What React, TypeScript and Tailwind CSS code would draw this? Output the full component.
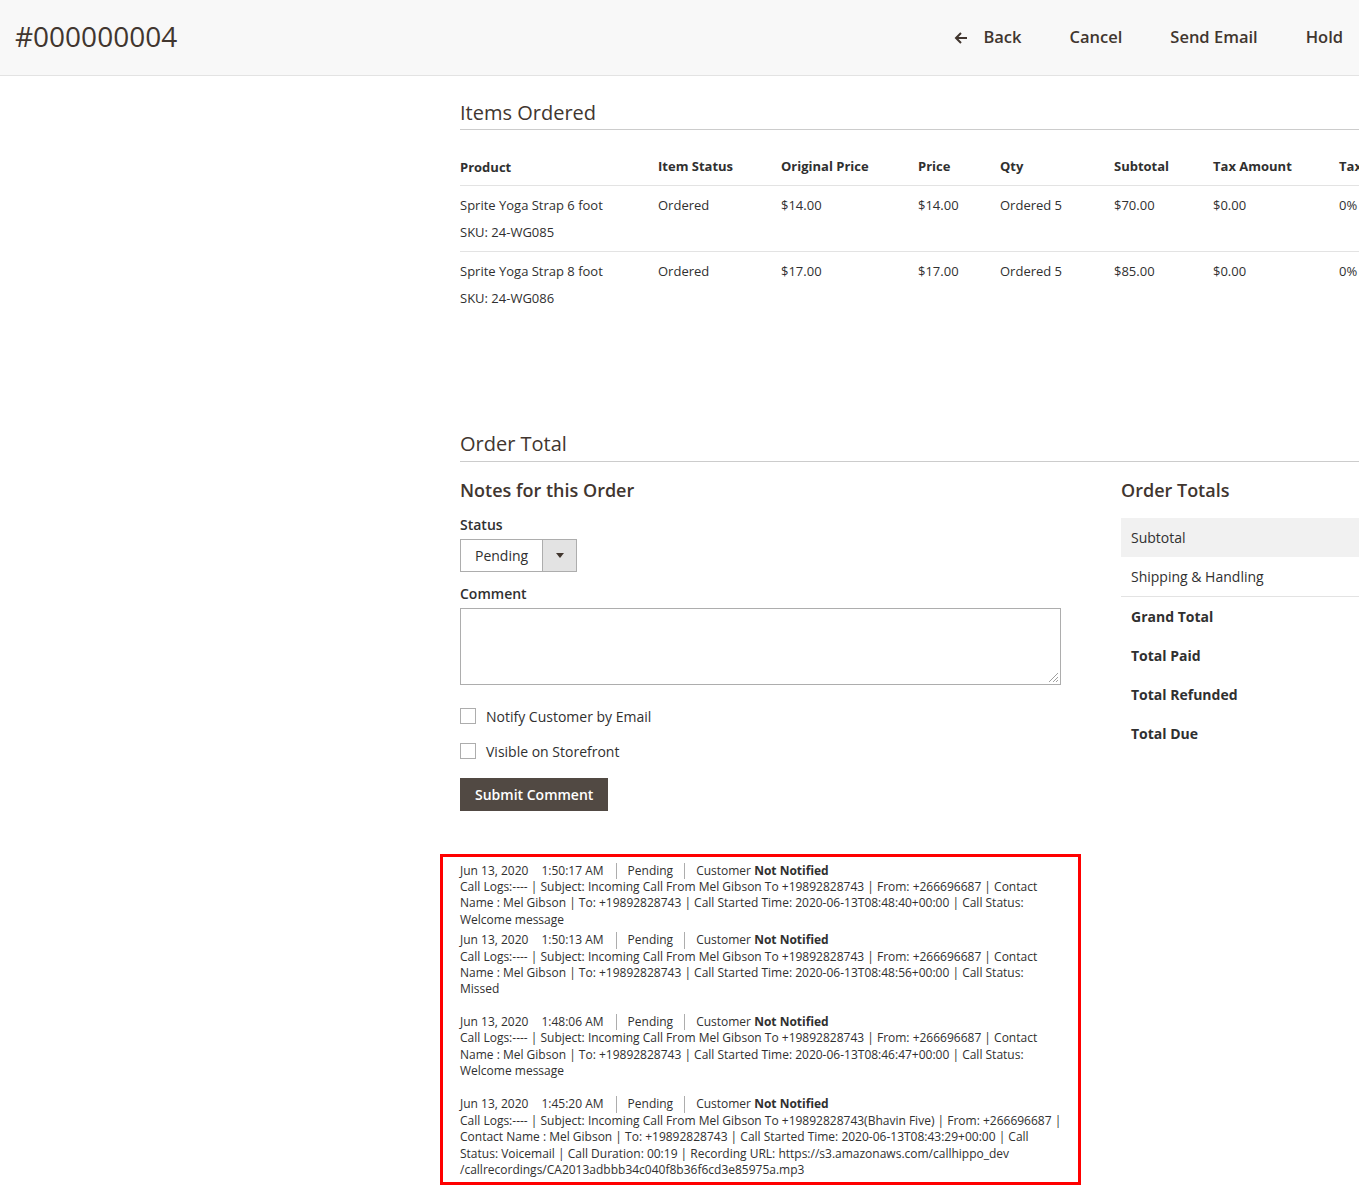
import React from 'react'

const items = [
  { name: 'Sprite Yoga Strap 6 foot', sku: '24-WG085', price: '$14.00', subtotal: '$70.00' },
  { name: 'Sprite Yoga Strap 8 foot', sku: '24-WG086', price: '$17.00', subtotal: '$85.00' },
]

const history = [
  {
    time: '1:50:17 AM',
    text: 'Call Logs:---- | Subject: Incoming Call From Mel Gibson To +19892828743 | From: +266696687 | Contact Name : Mel Gibson | To: +19892828743 | Call Started Time: 2020-06-13T08:48:40+00:00 | Call Status: Welcome message',
    gap: 'mb-[4px]',
  },
  {
    time: '1:50:13 AM',
    text: 'Call Logs:---- | Subject: Incoming Call From Mel Gibson To +19892828743 | From: +266696687 | Contact Name : Mel Gibson | To: +19892828743 | Call Started Time: 2020-06-13T08:48:56+00:00 | Call Status: Missed',
    gap: 'mb-[16px]',
  },
  {
    time: '1:48:06 AM',
    text: 'Call Logs:---- | Subject: Incoming Call From Mel Gibson To +19892828743 | From: +266696687 | Contact Name : Mel Gibson | To: +19892828743 | Call Started Time: 2020-06-13T08:46:47+00:00 | Call Status: Welcome message',
    gap: 'mb-[17px]',
  },
  {
    time: '1:45:20 AM',
    text: 'Call Logs:---- | Subject: Incoming Call From Mel Gibson To +19892828743(Bhavin Five) | From: +266696687 | Contact Name : Mel Gibson | To: +19892828743 | Call Started Time: 2020-06-13T08:43:29+00:00 | Call Status: Voicemail | Call Duration: 00:19 | Recording URL: https://s3.amazonaws.com/callhippo_dev /callrecordings/CA2013adbbb34c040f8b36f6cd3e85975a.mp3',
    gap: '',
  },
]

const totals = ['Grand Total', 'Total Paid', 'Total Refunded', 'Total Due']

export default function App() {
  return (
    <div className="w-[1359px] h-[1185px] overflow-hidden bg-white text-[#303030]" style={{ fontFamily: '"Open Sans", sans-serif' }}>
      {/* Page header */}
      <div className="h-[76px] bg-[#f8f8f8] border-b border-[#e3e3e3] flex items-center justify-between pl-[15px] pr-[16px]">
        <h1 className="text-[28px] text-[#41362f] leading-none pb-[4px]">#000000004</h1>
        <div className="flex items-center text-[16.5px] font-semibold text-[#41362f] gap-[48px]">
          <button className="flex items-center gap-[14px]">
            <svg width="16" height="16" viewBox="0 0 16 16" fill="none" stroke="#41362f" strokeWidth="2">
              <path d="M14 8H3M8 3L3 8l5 5" />
            </svg>
            Back
          </button>
          <button>Cancel</button>
          <button>Send Email</button>
          <button>Hold</button>
        </div>
      </div>

      <div className="ml-[460px] w-[1000px]">
        {/* Items Ordered */}
        <div className="mt-[23px] pb-[2px] border-b border-[#cccccc]">
          <h2 className="text-[20px] text-[#41362f] leading-[28px]">Items Ordered</h2>
        </div>
        <table className="mt-[27px] text-[13px] text-left border-collapse w-[1000px]">
          <thead>
            <tr className="border-b border-[#e3e3e3]">
              <th className="font-bold w-[198px] pb-[8px] leading-[18px]">Product</th>
              <th className="font-bold w-[123px] pb-[8px]">Item Status</th>
              <th className="font-bold w-[137px] pb-[8px]">Original Price</th>
              <th className="font-bold w-[82px] pb-[8px]">Price</th>
              <th className="font-bold w-[114px] pb-[8px]">Qty</th>
              <th className="font-bold w-[99px] pb-[8px]">Subtotal</th>
              <th className="font-bold w-[126px] pb-[8px]">Tax Amount</th>
              <th className="font-bold pb-[8px]">Tax Percent</th>
            </tr>
          </thead>
          <tbody>
            {items.map((it, i) => (
              <tr key={it.sku} className={i === 0 ? 'border-b border-[#e3e3e3] align-top' : 'align-top'}>
                <td className="pt-[10px] pb-[10px] leading-[18px]">
                  <div>{it.name}</div>
                  <div className="mt-[9px]">SKU: {it.sku}</div>
                </td>
                <td className="pt-[10px]">Ordered</td>
                <td className="pt-[10px]">{it.price}</td>
                <td className="pt-[10px]">{it.price}</td>
                <td className="pt-[10px]">Ordered 5</td>
                <td className="pt-[10px]">{it.subtotal}</td>
                <td className="pt-[10px]">$0.00</td>
                <td className="pt-[10px]">0%</td>
              </tr>
            ))}
          </tbody>
        </table>

        {/* Order Total */}
        <div className="mt-[113px] pb-[3px] border-b border-[#cccccc]">
          <h2 className="text-[20px] text-[#41362f] leading-[28px]">Order Total</h2>
        </div>

        <div className="flex mt-[15px]">
          <div className="w-[601px]">
            <h3 className="text-[18px] font-semibold text-[#41362f] leading-[26px]">Notes for this Order</h3>
            <div className="mt-[12px] text-[14px] font-semibold leading-[20px]">Status</div>
            <div className="mt-[4px] flex w-[117px] h-[33px] border border-[#adadad]">
              <div className="flex-1 flex items-center pl-[14px] text-[14px]">Pending</div>
              <div className="w-[34px] bg-[#e3e3e3] border-l border-[#adadad] flex items-center justify-center">
                <svg width="8" height="5" viewBox="0 0 8 5"><path d="M0 0h8L4 5z" fill="#41362f" /></svg>
              </div>
            </div>
            <div className="mt-[12px] text-[14px] font-semibold leading-[20px]">Comment</div>
            <div className="mt-[4px] relative w-[601px] h-[77px] border border-[#adadad]">
              <svg className="absolute right-[1px] bottom-[1px]" width="12" height="12" viewBox="0 0 12 12" stroke="#a0a0a0" strokeWidth="1">
                <path d="M11 2L2 11M11 6L6 11M11 9L9 11" />
              </svg>
            </div>
            <label className="mt-[21px] flex items-center gap-[10px] text-[14px]">
              <span className="w-[16px] h-[16px] border border-[#adadad] bg-white" />
              Notify Customer by Email
            </label>
            <label className="mt-[14px] flex items-center gap-[10px] text-[14px]">
              <span className="w-[16px] h-[16px] border border-[#adadad] bg-white" />
              Visible on Storefront
            </label>
            <button className="mt-[16px] h-[33px] px-[15px] bg-[#514943] text-white text-[14px] font-semibold">Submit Comment</button>
          </div>

          <div className="ml-[60px] flex-1">
            <h3 className="text-[18px] font-semibold text-[#41362f] leading-[26px]">Order Totals</h3>
            <div className="mt-[15px] text-[14px]">
              <div className="h-[39px] bg-[#f1f1f1] flex items-center pl-[10px]">Subtotal</div>
              <div className="h-[40px] border-b border-[#e3e3e3] flex items-center pl-[10px]">Shipping &amp; Handling</div>
              {totals.map((t) => (
                <div key={t} className="h-[39px] flex items-center pl-[10px] font-bold">{t}</div>
              ))}
            </div>
          </div>
        </div>
      </div>

      {/* Comment history */}
      <div className="ml-[440px] mt-[43px] w-[641px] border-[3px] border-[#ff0000] pl-[17px] pr-[16px] pt-[6px] pb-[4px] text-[12px] leading-[16.4px]">
        {history.map((h) => (
          <div key={h.time} className={h.gap}>
            <div className="flex items-center">
              <span>Jun 13, 2020</span>
              <span className="ml-[13px] pr-[12px] border-r border-[#adadad]">{h.time}</span>
              <span className="px-[11px] border-r border-[#adadad]">Pending</span>
              <span className="pl-[11px]">Customer <b className="font-bold">Not Notified</b></span>
            </div>
            <div>{h.text}</div>
          </div>
        ))}
      </div>
    </div>
  )
}
